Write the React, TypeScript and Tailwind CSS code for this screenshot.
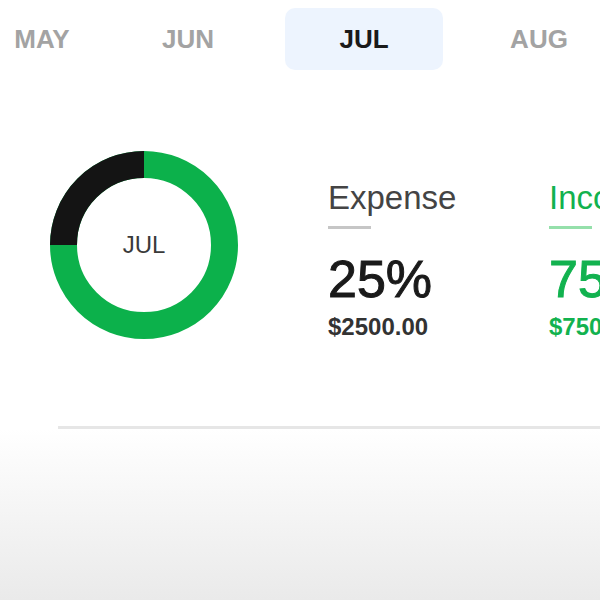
import React from 'react';

const months = [
  { label: 'MAY', cls: 'w-[60px]' },
  { label: 'JUN', cls: 'w-[158px] ml-[37px]' },
  { label: 'JUL', cls: 'w-[158px] ml-[18px]', active: true },
  { label: 'AUG', cls: 'w-[158px] ml-[17px]' },
];

const Donut: React.FC<{ label: string }> = ({ label }) => (
  <div className="relative w-[188px] h-[188px] shrink-0">
    <svg width="188" height="188" viewBox="0 0 188 188">
      <circle cx="94" cy="94" r="80.5" fill="none" stroke="#0cb14b" strokeWidth="27" />
      <path d="M 94 13.5 A 80.5 80.5 0 0 0 13.5 94" fill="none" stroke="#141414" strokeWidth="27" />
    </svg>
    <div className="absolute inset-0 flex items-center justify-center text-[24px] text-[#3a3a3a]">
      {label}
    </div>
  </div>
);

const Stat: React.FC<{ title: string; pct: string; amount: string; green?: boolean }> = ({
  title,
  pct,
  amount,
  green,
}) => (
  <div className="flex flex-col shrink-0 w-[221px]">
    <div className={`text-[33px] leading-[38px] ${green ? 'text-[#12b24f]' : 'text-[#444]'}`}>{title}</div>
    <div className={`mt-[9px] w-[43px] h-[3px] ${green ? 'bg-[#95e0ab]' : 'bg-[#c6c6c6]'}`} />
    <div
      className={`mt-[24px] text-[52px] leading-[52px] whitespace-nowrap [-webkit-text-stroke:1px_currentColor] ${
        green ? 'text-[#12b24f]' : 'text-[#1a1a1a]'
      }`}
    >
      {pct}
    </div>
    <div className={`mt-[9px] text-[24px] leading-[26px] font-bold whitespace-nowrap ${green ? 'text-[#12b24f]' : 'text-[#333]'}`}>
      {amount}
    </div>
  </div>
);

export default function App() {
  return (
    <div className="w-[600px] h-[600px] overflow-hidden bg-white flex flex-col font-['Liberation_Sans',Arial,sans-serif]">
      {/* month tabs */}
      <div className="flex pt-[8px] pl-[12px]">
        {months.map((m) => (
          <div
            key={m.label}
            className={`${m.cls} shrink-0 h-[62px] flex items-center justify-center text-[26px] font-bold rounded-[10px] ${
              m.active ? 'bg-[#edf4fe] text-[#1a1a1a]' : 'text-[#a3a3a3]'
            }`}
          >
            {m.label}
          </div>
        ))}
      </div>

      {/* summary */}
      <div className="flex items-start pl-[50px] mt-[81px]">
        <Donut label="JUL" />
        <div className="flex ml-[90px] mt-[28px]">
          <Stat title="Expense" pct="25%" amount="$2500.00" />
          <Stat title="Income" pct="75%" amount="$7500.00" green />
        </div>
      </div>

      <div className="ml-[58px] mt-[86px] h-[3px] bg-[#e6e6e6]" />
      <div className="flex-1 bg-gradient-to-b from-white to-[#eaeaea]" />
    </div>
  );
}
